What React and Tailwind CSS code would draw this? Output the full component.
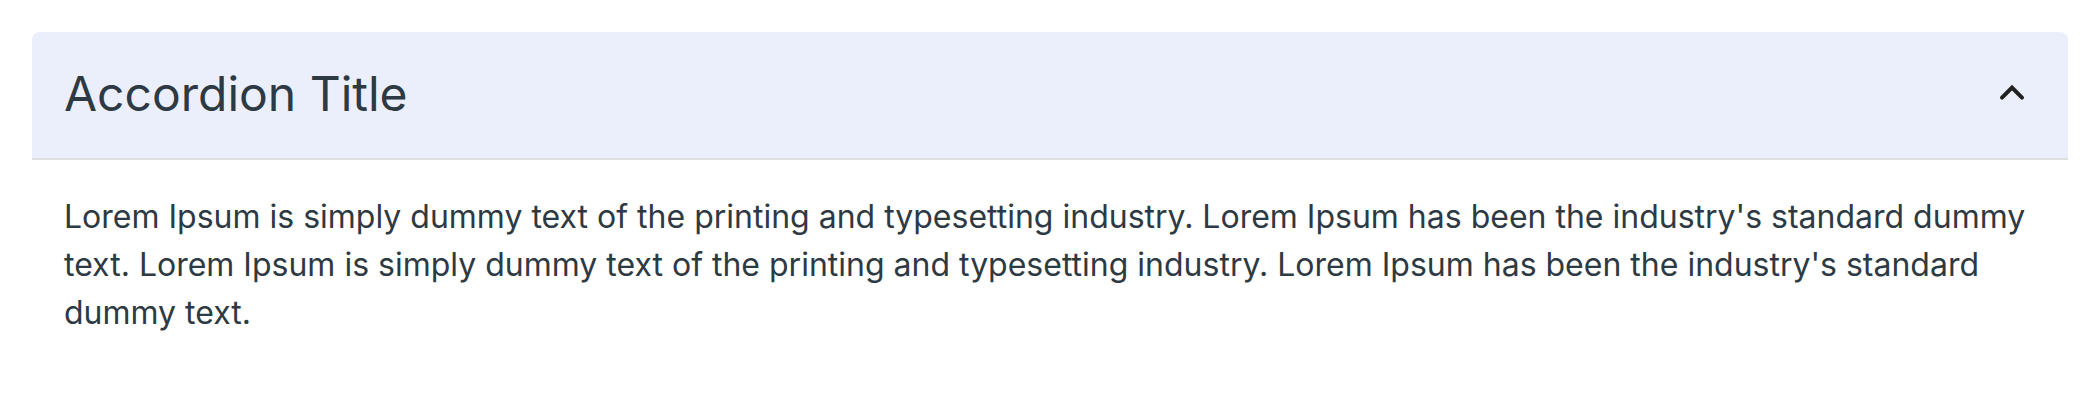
import { useState } from "react";

export default function App() {
  const [open, setOpen] = useState(true);
  return (
    <main className="bg-white p-8 font-['Inter',sans-serif] text-[#2e3a43]">
      <section>
        <h2>
          <button
            type="button"
            aria-expanded={open}
            aria-controls="accordion-panel"
            onClick={() => setOpen(!open)}
            className="flex w-full items-center justify-between rounded-t-lg bg-[#ebeffb] px-8 pt-[30px] pb-8 text-left text-5xl leading-16"
          >
            Accordion Title
            <svg
              aria-hidden="true"
              viewBox="0 0 24 24"
              className={open ? "size-12" : "size-12 rotate-180"}
              fill="none"
              stroke="#212121"
              strokeWidth="2"
              strokeLinecap="round"
            >
              <path d="M7 13.85l5-5 5 5" />
            </svg>
          </button>
        </h2>
        {open && (
          <div id="accordion-panel" className="border-t-2 border-[#dedede] px-8 pt-[33px] pb-8 text-[32px] leading-12">
            <p>
              Lorem Ipsum is simply dummy text of the printing and typesetting industry. Lorem Ipsum has been the
              industry's standard dummy text. Lorem Ipsum is simply dummy text of the printing and typesetting industry.
              Lorem Ipsum has been the industry's standard dummy text.
            </p>
          </div>
        )}
      </section>
    </main>
  );
}
